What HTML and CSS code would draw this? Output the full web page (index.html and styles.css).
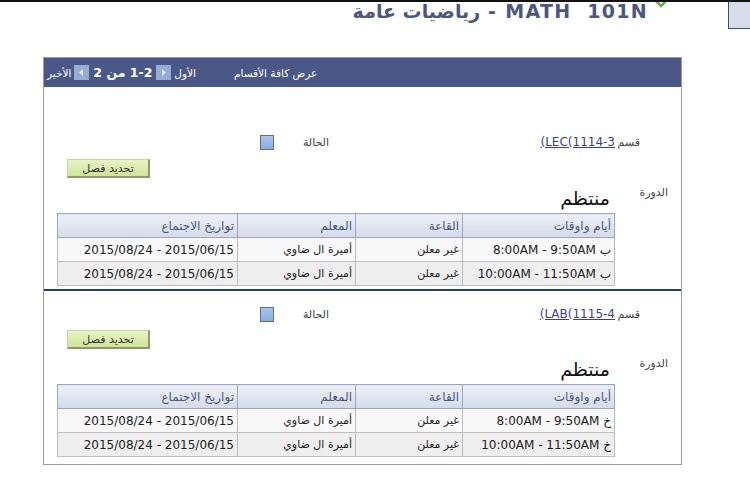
FILE: index.html
```html
<!DOCTYPE html>
<html lang="ar" dir="rtl">
<head>
  <meta charset="UTF-8" />
  <meta name="viewport" content="width=device-width, initial-scale=1.0"/>
  <title>MATH 101N - رياضيات عامة</title>
  <link rel="stylesheet" href="styles.css">
</head>
<body>
  <!-- Page title -->
  <div class="titlebar">
    <div class="corner-box"></div>
    <svg class="tick" width="14" height="8" viewBox="0 0 14 8">
      <polyline points="1,0 7,6 13,0" fill="none" stroke="#5fae4a" stroke-width="2.4"/>
    </svg>
    <h1 class="course-title">MATH&nbsp; 101N - رياضيات عامة</h1>
  </div>

  <div class="panel">
    <!-- Panel header with pager -->
    <div class="panel-head">
      <span class="view-all">عرض كافة الأقسام</span>
      <div class="pager">
        <span>الأول</span>
        <svg class="nav-icon" width="15" height="15" viewBox="0 0 15 15">
          <rect x="0" y="0" width="15" height="15" fill="#97abd3"/>
          <polygon points="6,4 10,7.5 6,11" fill="#dfe7f5"/>
        </svg>
        <b class="count">1-2 من 2</b>
        <svg class="nav-icon" width="15" height="15" viewBox="0 0 15 15">
          <rect x="0" y="0" width="15" height="15" fill="#97abd3"/>
          <polygon points="9,4 5,7.5 9,11" fill="#dfe7f5"/>
        </svg>
        <span>الأخير</span>
      </div>
    </div>

    <!-- Section 1 -->
    <div class="section first">
      <div class="sec-row">
        <span class="lbl-sec">قسم</span>
        <span class="sec-link"><a href="#"><bdo dir="ltr">(LEC(1114-3</bdo></a></span>
        <span class="lbl-status">الحالة</span>
        <span class="status-box"></span>
      </div>
      <div class="btn-row"><button type="button" class="btn-select">تحديد فصل</button></div>
      <div class="course-row">
        <span class="lbl-course">الدورة</span>
        <div class="course-body">
          <div class="session">منتظم</div>
          <table class="meetings">
            <tr>
              <th class="c1">أيام واوقات</th>
              <th class="c2">القاعة</th>
              <th class="c3">المعلم</th>
              <th class="c4">تواريخ الاجتماع</th>
            </tr>
            <tr class="odd">
              <td>ب 8:00AM - 9:50AM</td>
              <td class="ar">غير معلن</td>
              <td class="ar">أميرة ال ضاوي</td>
              <td>2015/06/15 - 2015/08/24</td>
            </tr>
            <tr class="even">
              <td>ب 10:00AM - 11:50AM</td>
              <td class="ar">غير معلن</td>
              <td class="ar">أميرة ال ضاوي</td>
              <td>2015/06/15 - 2015/08/24</td>
            </tr>
          </table>
        </div>
      </div>
    </div>

    <!-- Section 2 -->
    <div class="section second">
      <div class="sec-row">
        <span class="lbl-sec">قسم</span>
        <span class="sec-link"><a href="#"><bdo dir="ltr">(LAB(1115-4</bdo></a></span>
        <span class="lbl-status">الحالة</span>
        <span class="status-box"></span>
      </div>
      <div class="btn-row"><button type="button" class="btn-select">تحديد فصل</button></div>
      <div class="course-row">
        <span class="lbl-course">الدورة</span>
        <div class="course-body">
          <div class="session">منتظم</div>
          <table class="meetings">
            <tr>
              <th class="c1">أيام واوقات</th>
              <th class="c2">القاعة</th>
              <th class="c3">المعلم</th>
              <th class="c4">تواريخ الاجتماع</th>
            </tr>
            <tr class="odd">
              <td>خ 8:00AM - 9:50AM</td>
              <td class="ar">غير معلن</td>
              <td class="ar">أميرة ال ضاوي</td>
              <td>2015/06/15 - 2015/08/24</td>
            </tr>
            <tr class="even">
              <td>خ 10:00AM - 11:50AM</td>
              <td class="ar">غير معلن</td>
              <td class="ar">أميرة ال ضاوي</td>
              <td>2015/06/15 - 2015/08/24</td>
            </tr>
          </table>
        </div>
      </div>
    </div>
  </div>
</body>
</html>
```

FILE: styles.css
```css
body {
  margin: 0;
  font-family: "DejaVu Sans", sans-serif;
  background-color: #fff;
  color: #333;
  border-top: 2px solid #111;
}

/* Title bar */
.titlebar {
  display: flex;
  align-items: flex-start;
  height: 29px;
}
.corner-box {
  width: 21px;
  height: 28px;
  margin-top: -2px;
  background: #d8dce9;
  border-left: 1px solid #3f4b73;
  border-bottom: 1px solid #3f4b73;
}
.tick {
  margin-right: 60px;
  margin-top: -2px;
}
.course-title {
  margin: 0 6px 0 0;
  font-size: 19px;
  line-height: 19px;
  letter-spacing: 1.3px;
  font-weight: bold;
  color: #4b5683;
}

/* Panel */
.panel {
  width: 637px;
  margin: 26px 68px 0 auto;
  border: 1px solid #9c9c9c;
}
.panel-head {
  display: flex;
  justify-content: flex-end;
  align-items: center;
  height: 29px;
  padding-left: 3px;
  background-color: #4a5888;
  color: #fff;
  font-size: 10.5px;
}
.view-all {
  margin-left: 38px;
}
.pager {
  display: flex;
  align-items: center;
  gap: 3px;
}
.pager .count {
  font-size: 12.5px;
  margin: 0 1px;
}

/* Sections */
.section {
  padding-bottom: 3px;
}
.section.first {
  padding-top: 45px;
  border-bottom: 2px solid #2c3b6f;
}
.section.second {
  padding-top: 13px;
  padding-bottom: 7px;
}
.sec-row {
  display: flex;
  align-items: center;
  height: 20px;
  font-size: 11px;
}
.lbl-sec {
  width: 66px;
  padding-right: 41px;
  box-sizing: border-box;
  color: #444;
}
.sec-link {
  width: 275px;
  font-size: 12px;
}
.sec-link a {
  color: #3d3d9d;
}
.lbl-status {
  width: 66px;
  padding-right: 11px;
  box-sizing: border-box;
  color: #444;
}
.status-box {
  width: 12px;
  height: 13px;
  background: linear-gradient(#a9c4ee, #8aaee2);
  border: 1px solid #5c6f98;
}

.btn-row {
  display: flex;
  justify-content: flex-end;
  padding-left: 23px;
  margin-top: 7px;
}
.section.second .btn-row {
  margin-top: 6px;
}
.btn-select {
  width: 83px;
  height: 19px;
  padding: 0;
  font-family: "DejaVu Sans", sans-serif;
  font-size: 11px;
  color: #333;
  background: linear-gradient(#e8f4c6, #cfe497);
  border: 1px solid #c6da95;
  border-right: 2px solid #8c9a6e;
  border-bottom: 2px solid #8c9a6e;
}

.course-row {
  display: flex;
  margin-top: 8px;
}
.lbl-course {
  width: 66px;
  padding-right: 13px;
  box-sizing: border-box;
  font-size: 11px;
  color: #444;
  line-height: 14px;
}
.course-body {
  width: 557px;
}
.session {
  height: 27px;
  line-height: 24px;
  padding-right: 5px;
  font-size: 19px;
  color: #111;
}

/* Meeting table */
.meetings {
  width: 557px;
  border-collapse: collapse;
  table-layout: fixed;
  font-size: 12px;
}
.meetings th {
  box-sizing: border-box;
  height: 24px;
  padding: 0 3px;
  text-align: right;
  font-weight: normal;
  color: #4a5784;
  background: linear-gradient(#edf0f7, #d3dbea);
  border: 1px solid #9ba6c3;
}
.meetings .c1 { width: 152px; }
.meetings .c2 { width: 107px; }
.meetings .c3 { width: 118px; }
.meetings .c4 { width: 180px; }
.meetings td {
  box-sizing: border-box;
  height: 24px;
  padding: 0 3px;
  text-align: right;
  color: #222;
  border: 1px solid #bdbdbd;
}
.meetings td.ar {
  font-size: 11px;
}
.meetings tr.odd td {
  background: #f8f8f8;
}
.meetings tr.even td {
  background: #eeeeee;
}
```
